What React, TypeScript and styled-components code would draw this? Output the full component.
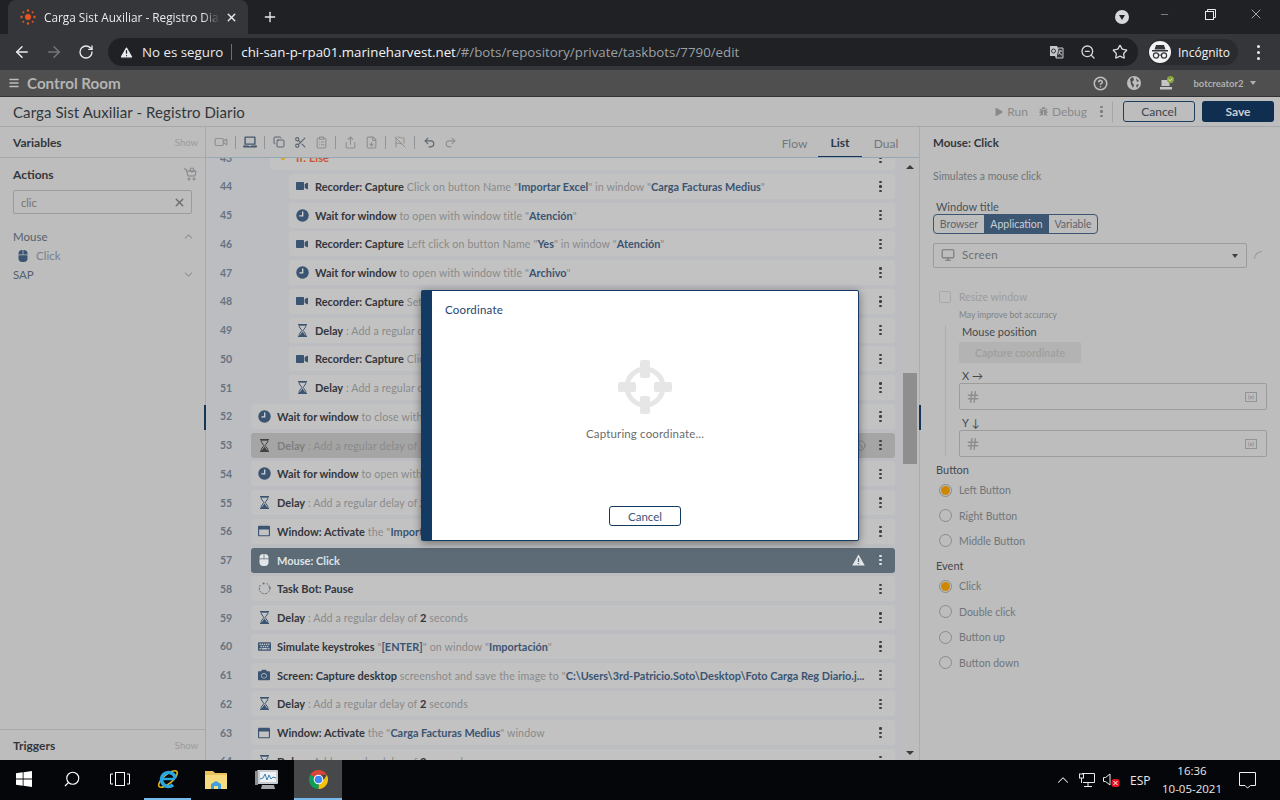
import React from "react"
import styled, { createGlobalStyle } from "styled-components"
import {
  FaVideo,
  FaRegWindowMaximize,
  FaMouse,
  FaKeyboard,
  FaCamera,
  FaLaptop,
  FaPlay,
  FaBug,
} from "react-icons/fa"
import {
  ArrowLeft,
  ArrowRight,
  RotateCw,
  X,
  Plus,
  Minus,
  Search,
  ZoomOut,
  Star,
  Monitor,
  Hash,
  Undo2,
  Redo2,
  ChevronUp,
  ChevronDown,
  Menu,
  CircleHelp,
  TriangleAlert,
  Ban,
  Video,
  Copy,
  Scissors,
  ClipboardList,
  Share,
  FileDown,
  FlagOff,
} from "lucide-react"

const GlobalStyle = createGlobalStyle`
  html, body {
    margin: 0;
    padding: 0;
    width: 1280px;
    height: 800px;
    overflow: hidden;
    font-family: "Lato", "Liberation Sans", sans-serif;
  }
  * { box-sizing: border-box; }
`

const Screen = styled.div`
  width: 1280px;
  height: 800px;
  display: flex;
  flex-direction: column;
  background: #bdbdbd;
  overflow: hidden;
  position: relative;
`

/* browser chrome */
const TabStrip = styled.div`
  height: 34px;
  background: #202124;
  display: flex;
  align-items: stretch;
  padding-left: 8px;
  color: #fff;
  font-family: "Open Sans", "Noto Sans", sans-serif;
`

const Tab = styled.div`
  width: 240px;
  background: #35363a;
  border-radius: 8px 8px 0 0;
  display: flex;
  align-items: center;
  padding-left: 12px;
  font-size: 11.8px;
  color: #e8eaed;
`

const TabTitle = styled.span`
  margin: 0 5px 0 8px;
  width: 176px;
  white-space: nowrap;
  overflow: hidden;
  -webkit-mask-image: linear-gradient(to right, #000 90%, transparent);
`

const NewTab = styled.div`
  width: 30px;
  display: flex;
  align-items: center;
  justify-content: flex-end;
  color: #e8eaed;
`

const StripEnd = styled.div`
  margin-left: auto;
  display: flex;
  align-items: center;
  padding-right: 1px;
  color: #e8eaed;
`

const MediaDot = styled.div`
  width: 14px;
  height: 14px;
  border-radius: 50%;
  background: #d7d8da;
  display: flex;
  align-items: center;
  justify-content: center;
  margin-right: 12px;
  &::after {
    content: "";
    border-left: 3.5px solid transparent;
    border-right: 3.5px solid transparent;
    border-top: 5px solid #202124;
    margin-top: 1px;
  }
`

const WinButton = styled.div`
  width: 46px;
  display: flex;
  justify-content: center;
  margin-top: -6px;
`

const Omnibar = styled.div`
  height: 36px;
  background: #35363a;
  display: flex;
  align-items: center;
  padding-left: 6px;
  color: #e8eaed;
  font-family: "Open Sans", "Noto Sans", sans-serif;
`

const NavIcon = styled.div<{ $off?: boolean }>`
  width: 32px;
  display: flex;
  justify-content: center;
  color: ${(p) => (p.$off ? "#74767a" : "#e8eaed")};
`

const UrlBox = styled.div`
  margin-left: 6px;
  width: 1030px;
  height: 28px;
  border-radius: 14px;
  background: #202124;
  display: flex;
  align-items: center;
  padding: 0 10px 0 11px;
  font-size: 13.3px;
  white-space: nowrap;
`

const UrlWarn = styled.span`
  margin: 0 8px 0 0;
  display: flex;
`

const UrlSep = styled.span`
  width: 1px;
  height: 16px;
  background: #6d6e71;
  margin: 0 9px 0 8px;
`

const UrlHost = styled.span`
  color: #f1f3f4;
`

const UrlPath = styled.span`
  color: #9aa0a6;
`

const UrlIcons = styled.div`
  margin-left: auto;
  display: flex;
  gap: 16px;
  align-items: center;
  color: #d5d7da;
`

const Incognito = styled.div`
  margin-left: 10px;
  width: 90px;
  height: 26px;
  border-radius: 13px;
  background: #2a2b2f;
  display: flex;
  align-items: center;
  padding-left: 1px;
  gap: 7px;
  font-size: 12px;
  color: #f1f3f4;
`

const IncognitoFace = styled.div`
  width: 22px;
  height: 22px;
  border-radius: 50%;
  background: #f1f3f4;
  display: flex;
  align-items: center;
  justify-content: center;
`

const ChromeDots = styled.div`
  margin-left: 19px;
  display: flex;
  flex-direction: column;
  gap: 3px;
  span {
    width: 3px;
    height: 3px;
    border-radius: 50%;
    background: #e8eaed;
  }
`

/* app header */
const TopBar = styled.div`
  height: 27px;
  background: #4f4f4f;
  border-bottom: 1px solid #333;
  display: flex;
  align-items: center;
  padding: 0 24.5px 0 8px;
  color: #bdbdbd;
`

const Brand = styled.div`
  margin-left: 7px;
  font-size: 15.2px;
  font-weight: 700;
  color: #b4b4b4;
`

const TopRight = styled.div`
  margin-left: auto;
  display: flex;
  align-items: center;
`

const UserName = styled.span`
  font-size: 9.5px;
  font-weight: 700;
  color: #b0b0b0;
  margin-left: 18px;
`

const Caret = styled.span<{ $color?: string }>`
  display: inline-block;
  border-left: 3.5px solid transparent;
  border-right: 3.5px solid transparent;
  border-top: 4px solid ${(p) => p.$color || "#b0b0b0"};
`

const UserCaret = styled(Caret)`
  margin-left: 6px;
`

const Gap = styled.span<{ $w: number }>`
  width: ${(p) => p.$w}px;
`

const TitleBar = styled.div`
  height: 30px;
  border-bottom: 1px solid #a8a8ac;
  background: #bdbdbd;
  display: flex;
  align-items: center;
  padding: 0 6px 0 13px;
`

const Title = styled.div`
  font-size: 15px;
  letter-spacing: 0.09px;
  color: #33363b;
`

const TitleActions = styled.div`
  margin-left: auto;
  display: flex;
  align-items: center;
  font-size: 12px;
  color: #8a8a8a;
`

const RunAction = styled.span`
  display: flex;
  align-items: center;
  gap: 4px;
  margin-right: 11px;
`

const Kebab = styled.span<{ $color?: string }>`
  width: 3px;
  display: flex;
  flex-direction: column;
  align-items: center;
  gap: 2px;
  span {
    width: 2.2px;
    height: 2.2px;
    border-radius: 50%;
    background: ${(p) => p.$color || "#3d4046"};
  }
`

const TitleKebab = styled.span`
  margin: 0 9px 0 2px;
`

const TitleSep = styled.span`
  width: 1px;
  height: 20px;
  background: #a6a6a6;
  margin-right: 10px;
`

const OutlineButton = styled.button`
  width: 72px;
  height: 21px;
  border: 1px solid #1d3d5f;
  border-radius: 3px;
  background: transparent;
  color: #3c4550;
  font: 400 12px "Lato", sans-serif;
  padding: 0;
`

const SaveButton = styled.button`
  width: 72px;
  height: 21px;
  margin-left: 7px;
  border: 0;
  border-radius: 3px;
  background: #102e4f;
  color: #c9ced4;
  font: 700 12px "Lato", sans-serif;
  padding: 0;
`

/* main panels */
const Main = styled.div`
  flex: 1;
  min-height: 0;
  display: flex;
`

const LeftPanel = styled.div`
  width: 206px;
  border-right: 1px solid #9dabb6;
  display: flex;
  flex-direction: column;
  background: #bdbdbd;
`

const PanelHead = styled.div`
  height: 31px;
  padding: 0 7px 0 13px;
  border-bottom: 1px solid #a9a9a9;
  display: flex;
  align-items: center;
  justify-content: space-between;
  font-size: 12px;
  font-weight: 700;
  color: #33373c;
`

const ShowLink = styled.span`
  font-size: 9.5px;
  font-weight: 400;
  color: #9b9b9b;
`

const ActionsBody = styled.div`
  flex: 1;
  padding: 7px 7px 0 13px;
`

const ActionsHead = styled.div`
  height: 18px;
  display: flex;
  align-items: center;
  justify-content: space-between;
  font-size: 12px;
  font-weight: 700;
  color: #33373c;
`

const SearchBox = styled.div`
  width: 179px;
  height: 24px;
  margin-top: 7px;
  border: 1px solid #9c9c9c;
  border-radius: 2px;
  display: flex;
  align-items: center;
  justify-content: space-between;
  padding: 0 5px 0 7px;
  font-size: 11px;
  color: #7a6e6e;
`

const Group = styled.div`
  margin-top: 13px;
  width: 182px;
  height: 19px;
  display: flex;
  align-items: center;
  justify-content: space-between;
  font-size: 11.5px;
  color: #55606c;
`

const NextGroup = styled(Group)`
  margin-top: 0;
`

const GroupItem = styled.div`
  height: 19px;
  display: flex;
  align-items: center;
  padding-left: 4px;
  gap: 7px;
  font-size: 11.5px;
  color: #75808c;
`

const TriggersHead = styled(PanelHead)`
  border-bottom: 0;
  border-top: 1px solid #a9a9a9;
`

const Center = styled.div`
  width: 714px;
  border-right: 1px solid #a9adb0;
  display: flex;
  flex-direction: column;
  min-height: 0;
`

const EditToolbar = styled.div`
  height: 31px;
  flex: none;
  border-bottom: 1px solid #96a7b4;
  display: flex;
  align-items: center;
  padding-left: 4.5px;
  color: #8a8a8a;
`

const ToolIcon = styled.span<{ $color?: string }>`
  width: 21px;
  display: flex;
  justify-content: center;
  color: ${(p) => p.$color || "#8f8f8f"};
`

const ToolSep = styled.span`
  width: 1px;
  height: 13px;
  background: #8f9498;
  margin: 0 3.5px;
`

const ViewTabs = styled.div`
  margin-left: auto;
  height: 100%;
  display: flex;
  padding-right: 9px;
  font-size: 12px;
  color: #73777c;
`

const ViewTab = styled.div<{ $on?: boolean; $w: number }>`
  width: ${(p) => p.$w}px;
  height: 30px;
  padding-top: 2px;
  display: flex;
  align-items: center;
  justify-content: center;
  color: ${(p) => (p.$on ? "#2c3a4a" : "#73777c")};
  font-weight: ${(p) => (p.$on ? 700 : 400)};
  border-bottom: ${(p) => (p.$on ? "1px solid #143556" : "0")};
`

const ListArea = styled.div`
  flex: 1;
  min-height: 0;
  display: flex;
  overflow: hidden;
  background: #bcbdc0;
`

const List = styled.div`
  flex: 1;
  margin-top: -12.8px;
`

const Row = styled.div`
  height: 28.75px;
  display: flex;
  align-items: flex-start;
  padding-right: 6px;
`

const RowNum = styled.div`
  width: 40px;
  height: 25px;
  flex: none;
  display: flex;
  align-items: center;
  justify-content: center;
  font-size: 10.5px;
  font-weight: 700;
  color: #667382;
`

const Card = styled.div<{ $level: number; $tone?: string }>`
  flex: 1;
  min-width: 0;
  height: 25px;
  margin-left: ${(p) => 5 + p.$level * 19}px;
  border-radius: 3px;
  display: flex;
  align-items: center;
  padding: 0 13px 0 5px;
  background: ${(p) =>
    p.$tone === "active" ? "#5c6b75" : p.$tone === "off" ? "#a5a5a5" : "#c2c2c2"};
`

const RowIcon = styled.span<{ $color?: string }>`
  width: 16px;
  flex: none;
  display: flex;
  justify-content: center;
  color: ${(p) => p.$color || "#3b5472"};
  margin-right: 5px;
`

const RowText = styled.div`
  flex: 1;
  min-width: 0;
  white-space: nowrap;
  overflow: hidden;
  font-size: 10.7px;
  color: #8a8a8a;
  letter-spacing: 0.1px;
`

const Strong = styled.span<{ $tone?: string }>`
  font-size: 11px;
  font-weight: 700;
  letter-spacing: 0;
  color: ${(p) =>
    p.$tone === "active" ? "#dfe3e6" : p.$tone === "off" ? "#7e7e7e" : "#33363c"};
`

const Val = styled.span`
  font-size: 10.9px;
  font-weight: 700;
  letter-spacing: 0;
  color: #3b5472;
`

const ElseText = styled.span`
  font-size: 11px;
  font-weight: 700;
  color: #c9552f;
`

const RowFlag = styled.span<{ $color: string; $gap: number }>`
  display: flex;
  color: ${(p) => p.$color};
  margin-right: ${(p) => p.$gap}px;
`

const Track = styled.div`
  width: 18px;
  flex: none;
  padding: 7px 2px 0;
  position: relative;
  background: #bdbdbd;
`

const TrackUp = styled.div`
  width: 0;
  margin: 0 auto;
  border-left: 4px solid transparent;
  border-right: 4px solid transparent;
  border-bottom: 4px solid #3c3c3c;
`

const Thumb = styled.div`
  height: 91px;
  margin-top: 204px;
  background: #8e8e8e;
`

const TrackDown = styled.div`
  position: absolute;
  bottom: 5px;
  left: 5px;
  border-left: 4px solid transparent;
  border-right: 4px solid transparent;
  border-top: 4px solid #3c3c3c;
`

const Handle = styled.div<{ $left: number }>`
  position: absolute;
  left: ${(p) => p.$left}px;
  top: 405px;
  width: 2px;
  height: 25px;
  background: #143556;
`

/* properties panel */
const RightPanel = styled.div`
  flex: 1;
  padding: 9px 13px 0 13px;
  background: #bdbdbd;
  display: flex;
  flex-direction: column;
`

const PropTitle = styled.div`
  font-size: 11.5px;
  font-weight: 700;
  color: #33363c;
  height: 13px;
  display: flex;
  align-items: center;
`

const PropDesc = styled.div`
  margin-top: 21px;
  font-size: 10.5px;
  color: #6f7479;
  height: 13px;
`

const FieldLabel = styled.div`
  margin: 17px 0 0 3px;
  font-size: 11px;
  color: #4b4f55;
  height: 13px;
  line-height: 13px;
`

const Segments = styled.div`
  width: 165px;
  height: 20px;
  margin-top: 1px;
  border: 1px solid #3c5571;
  border-radius: 4px;
  display: flex;
  overflow: hidden;
  font-size: 10.5px;
  color: #5d646c;
`

const Segment = styled.div<{ $on?: boolean; $w: number }>`
  width: ${(p) => p.$w}px;
  display: flex;
  align-items: center;
  justify-content: center;
  background: ${(p) => (p.$on ? "#3c5571" : "transparent")};
  color: ${(p) => (p.$on ? "#c9d0d8" : "#5d646c")};
`

const SelectRow = styled.div`
  margin-top: 9px;
  display: flex;
  align-items: center;
`

const SelectBox = styled.div`
  width: 314px;
  height: 25px;
  border: 1px solid #9c9c9c;
  border-radius: 2px;
  display: flex;
  align-items: center;
  padding: 0 8px 2px 7px;
  gap: 7px;
  font-size: 11.5px;
  color: #6c6f73;
  letter-spacing: 0.3px;
`

const SelectCaret = styled(Caret)`
  margin: 2px 0 0 auto;
`

const Spinner = styled.div`
  width: 8px;
  height: 8px;
  margin: -2px 0 0 7px;
  border-top: 1px solid #9a9a9a;
  border-left: 1px solid #9a9a9a;
  border-radius: 8px 0 0 0;
`

const CheckRow = styled.div`
  margin: 23px 0 0 6px;
  display: flex;
  align-items: center;
  gap: 8px;
  font-size: 10.5px;
  color: #9c9c9c;
`

const CheckBox = styled.span`
  width: 12px;
  height: 12px;
  border: 1px solid #a8a8a8;
  border-radius: 2px;
`

const Hint = styled.div`
  margin: 7px 0 0 26px;
  font-size: 8.5px;
  color: #7f8387;
  height: 10px;
  line-height: 10px;
`

const Nested = styled.div`
  margin: 5px 0 0 12px;
  border-left: 1px solid #adadad;
  padding-left: 13px;
  height: 131px;
`

const SubLabel = styled.div`
  font-size: 11px;
  color: #45494e;
  height: 14px;
  line-height: 14px;
  padding-left: 3px;
`

const CaptureBtn = styled.div`
  width: 122px;
  height: 21px;
  margin-top: 3px;
  border-radius: 2px;
  background: #b3b3b3;
  display: flex;
  align-items: center;
  justify-content: center;
  font-size: 10.5px;
  font-weight: 700;
  color: #a0a0a0;
`

const AxisLabel = styled(SubLabel)`
  margin-top: 6px;
`

const NumField = styled.div`
  width: 308px;
  height: 27px;
  border: 1px solid #9c9c9c;
  border-radius: 2px;
  display: flex;
  align-items: center;
  justify-content: space-between;
  padding: 0 9px 0 6px;
  color: #8f8f8f;
`

const VarBadge = styled.span`
  width: 12px;
  height: 10px;
  border: 1px solid #8f9499;
  font-size: 6px;
  line-height: 8px;
  text-align: center;
  color: #7d8287;
`

const SectionLabel = styled.div<{ $mt: number }>`
  margin: ${(p) => p.$mt}px 0 0 3px;
  font-size: 11px;
  color: #45494e;
  height: 14px;
  line-height: 13px;
`

const Radio = styled.div<{ $h: number }>`
  height: ${(p) => p.$h}px;
  margin-left: 6px;
  display: flex;
  align-items: center;
  gap: 7px;
  font-size: 10.5px;
  color: #70757a;
`

const RadioDot = styled.span<{ $on?: boolean }>`
  width: 13px;
  height: 13px;
  border: 1px solid #8b8b8b;
  border-radius: 50%;
  display: flex;
  align-items: center;
  justify-content: center;
  &::after {
    content: "";
    width: 9px;
    height: 9px;
    border-radius: 50%;
    background: ${(p) => (p.$on ? "#d08700" : "transparent")};
  }
`

/* coordinate dialog */
const Modal = styled.div`
  position: absolute;
  left: 421px;
  top: 290px;
  width: 438px;
  height: 251px;
  background: #fff;
  border: 1px solid #133a62;
  border-left-width: 11px;
  border-radius: 2px;
  box-shadow: 0 2px 8px rgba(0, 0, 0, 0.45);
  display: flex;
  flex-direction: column;
  align-items: center;
`

const ModalTitle = styled.div`
  align-self: flex-start;
  margin: 12px 0 0 13px;
  font-size: 11.5px;
  color: #25456b;
  letter-spacing: 0.2px;
  height: 13px;
  line-height: 13px;
`

const ModalIcon = styled.svg`
  margin-top: 43px;
  display: block;
`

const ModalText = styled.div`
  margin-top: 12px;
  font-size: 11.5px;
  color: #6c6c6c;
  letter-spacing: 0.15px;
  height: 14px;
  line-height: 14px;
`

const ModalCancel = styled.button`
  margin-top: auto;
  margin-bottom: 14px;
  width: 72px;
  height: 20px;
  padding: 0;
  background: #fff;
  border: 1px solid #133a62;
  border-radius: 3px;
  color: #3a5677;
  font: 400 11.5px "Lato", sans-serif;
`

/* windows taskbar */
const Taskbar = styled.div`
  height: 40px;
  flex: none;
  background: #05060a;
  display: flex;
  align-items: stretch;
  color: #fff;
  font-family: "Open Sans", "Noto Sans", sans-serif;
`

const TaskSlot = styled.div<{ $w: number; $active?: boolean; $open?: boolean }>`
  width: ${(p) => p.$w}px;
  display: flex;
  align-items: center;
  justify-content: center;
  background: ${(p) => (p.$active ? "#47484a" : "transparent")};
  border-bottom: 2px solid ${(p) => (p.$open ? "#76b9ed" : "transparent")};
`

const FlippedSearch = styled(Search)`
  transform: scaleX(-1);
`

const Tray = styled.div`
  margin-left: auto;
  display: flex;
  align-items: center;
  color: #e8e8e8;
`

const TrayLang = styled.span`
  font-size: 12px;
  margin-left: 10px;
  width: 27px;
`

const TrayClock = styled.div`
  width: 70px;
  text-align: center;
  font-size: 11.5px;
  line-height: 18px;
`

const TrayNote = styled.div`
  margin: 0 24px 0 12px;
  display: flex;
`

type Part = { t: string; k?: "b" | "v" }
type RowData = {
  n: number
  level: number
  icon: string
  parts: Part[]
  tone?: string
  flag?: "warn" | "off"
}

const delay: Part[] = [
  { t: "Delay", k: "b" },
  { t: " : Add a regular delay of " },
  { t: "2", k: "b" },
  { t: " seconds" },
]

const waitFor = (how: string, win: string): Part[] => [
  { t: "Wait for window", k: "b" },
  { t: ` to ${how} with window title "` },
  { t: win, k: "v" },
  { t: '"' },
]

const rows: RowData[] = [
  {
    n: 44,
    level: 2,
    icon: "video",
    parts: [
      { t: "Recorder: Capture", k: "b" },
      { t: ' Click on button Name "' },
      { t: "Importar Excel", k: "v" },
      { t: '" in window "' },
      { t: "Carga Facturas Medius", k: "v" },
      { t: '"' },
    ],
  },
  { n: 45, level: 2, icon: "clock", parts: waitFor("open", "Atención") },
  {
    n: 46,
    level: 2,
    icon: "video",
    parts: [
      { t: "Recorder: Capture", k: "b" },
      { t: ' Left click on button Name "' },
      { t: "Yes", k: "v" },
      { t: '" in window "' },
      { t: "Atención", k: "v" },
      { t: '"' },
    ],
  },
  { n: 47, level: 2, icon: "clock", parts: waitFor("open", "Archivo") },
  {
    n: 48,
    level: 2,
    icon: "video",
    parts: [{ t: "Recorder: Capture", k: "b" }, { t: " Set text in textbox" }],
  },
  { n: 49, level: 2, icon: "hourglass", parts: delay },
  {
    n: 50,
    level: 2,
    icon: "video",
    parts: [{ t: "Recorder: Capture", k: "b" }, { t: " Click on button" }],
  },
  { n: 51, level: 2, icon: "hourglass", parts: delay },
  { n: 52, level: 0, icon: "clock", parts: waitFor("close", "Archivo") },
  { n: 53, level: 0, icon: "hourglass", parts: delay, tone: "off", flag: "off" },
  { n: 54, level: 0, icon: "clock", parts: waitFor("open", "Importación") },
  { n: 55, level: 0, icon: "hourglass", parts: delay },
  {
    n: 56,
    level: 0,
    icon: "window",
    parts: [
      { t: "Window: Activate", k: "b" },
      { t: ' the "' },
      { t: "Importación", k: "v" },
      { t: '" window' },
    ],
  },
  {
    n: 57,
    level: 0,
    icon: "mouse",
    parts: [{ t: "Mouse: Click", k: "b" }],
    tone: "active",
    flag: "warn",
  },
  { n: 58, level: 0, icon: "pause", parts: [{ t: "Task Bot: Pause", k: "b" }] },
  { n: 59, level: 0, icon: "hourglass", parts: delay },
  {
    n: 60,
    level: 0,
    icon: "keyboard",
    parts: [
      { t: "Simulate keystrokes", k: "b" },
      { t: ' "' },
      { t: "[ENTER]", k: "v" },
      { t: '" on window "' },
      { t: "Importación", k: "v" },
      { t: '"' },
    ],
  },
  {
    n: 61,
    level: 0,
    icon: "camera",
    parts: [
      { t: "Screen: Capture desktop", k: "b" },
      { t: ' screenshot and save the image to "' },
      { t: "C:\\Users\\3rd-Patricio.Soto\\Desktop\\Foto Carga Reg Diario.j...", k: "v" },
    ],
  },
  { n: 62, level: 0, icon: "hourglass", parts: delay },
  {
    n: 63,
    level: 0,
    icon: "window",
    parts: [
      { t: "Window: Activate", k: "b" },
      { t: ' the "' },
      { t: "Carga Facturas Medius", k: "v" },
      { t: '" window' },
    ],
  },
  { n: 64, level: 0, icon: "hourglass", parts: delay },
]

function ClockIcon({ color = "#3b5472" }: { color?: string }) {
  return (
    <svg width="13" height="13" viewBox="0 0 13 13">
      <circle cx="6.5" cy="6.5" r="6.2" fill={color} />
      <path d="M6.7 2.6v4.2H3.4" fill="none" stroke="#d4d4d4" strokeWidth="1.3" />
    </svg>
  )
}

function PauseIcon() {
  return (
    <svg width="13" height="13" viewBox="0 0 13 13" fill="none" stroke="#5f6d7b">
      <path d="M8.5 1.6A5.3 5.3 0 1 1 3 2.6" strokeDasharray="2 1" />
      <circle cx="5.6" cy="1.4" r="1" fill="#5f6d7b" stroke="none" />
      <path d="M10.6 5.2l1.6 1.2 1-1.4" />
    </svg>
  )
}

function HourglassIcon({ color = "#3b5472" }: { color?: string }) {
  return (
    <svg width="11" height="13" viewBox="0 0 11 13">
      <path d="M1 .5h9M1 12.5h9" stroke={color} strokeWidth="1.2" />
      <path
        d="M2 1.2h7c0 2.4-2 3.4-2.8 5.3C7 8.4 9 9.4 9 11.8H2c0-2.4 2-3.4 2.8-5.3C4 4.6 2 3.6 2 1.2z"
        fill="none"
        stroke={color}
      />
      <path d="M5.5 7.4 8.6 12H2.4z" fill={color} />
    </svg>
  )
}

function WarnIcon() {
  return (
    <svg width="13" height="12" viewBox="0 0 13 12">
      <path d="M6.5.5 12.8 11.5H.2z" fill="#e3e6e8" />
      <path d="M6.5 4v4M6.5 9v1.3" stroke="#5c6b75" strokeWidth="1.3" />
    </svg>
  )
}

function rowIcon(name: string, tone?: string) {
  const c = tone === "active" ? "#e3e6e8" : tone === "off" ? "#3f4145" : "#3b5472"
  switch (name) {
    case "video":
      return <FaVideo size={12} color={c} />
    case "clock":
      return <ClockIcon color={c} />
    case "hourglass":
      return <HourglassIcon color={c} />
    case "window":
      return <FaRegWindowMaximize size={12} color={c} />
    case "mouse":
      return <FaMouse size={12} color={c} />
    case "keyboard":
      return <FaKeyboard size={13} color={c} />
    case "camera":
      return <FaCamera size={12} color={c} />
    default:
      return <PauseIcon />
  }
}

function Dots({ color }: { color?: string }) {
  return (
    <Kebab $color={color}>
      <span />
      <span />
      <span />
    </Kebab>
  )
}

function ListRow({ row }: { row: RowData }) {
  return (
    <Row>
      <RowNum>{row.n}</RowNum>
      <Card $level={row.level} $tone={row.tone}>
        <RowIcon>{rowIcon(row.icon, row.tone)}</RowIcon>
        <RowText>
          {row.parts.map((p, i) =>
            p.k === "b" ? (
              <Strong key={i} $tone={row.tone}>
                {p.t}
              </Strong>
            ) : p.k === "v" ? (
              <Val key={i}>{p.t}</Val>
            ) : (
              <span key={i}>{p.t}</span>
            ),
          )}
        </RowText>
        {row.flag === "warn" && (
          <RowFlag $color="#e3e6e8" $gap={14}>
            <WarnIcon />
          </RowFlag>
        )}
        {row.flag === "off" && (
          <RowFlag $color="#7f7f7f" $gap={13}>
            <Ban size={11} />
          </RowFlag>
        )}
        <Dots color={row.tone === "active" ? "#dfe3e6" : undefined} />
      </Card>
    </Row>
  )
}

function Favicon() {
  return (
    <svg width="16" height="16" viewBox="0 0 16 16" fill="#e8551f">
      <circle cx="8" cy="8" r="3" />
      <circle cx="8" cy="1.5" r="1.2" />
      <circle cx="8" cy="14.5" r="1.2" />
      <circle cx="1.5" cy="8" r="1.2" />
      <circle cx="14.5" cy="8" r="1.2" />
      <circle cx="3.3" cy="3.3" r="1" />
      <circle cx="12.7" cy="3.3" r="1" />
      <circle cx="3.3" cy="12.7" r="1" />
      <circle cx="12.7" cy="12.7" r="1" />
    </svg>
  )
}

function TranslateIcon() {
  return (
    <svg width="15" height="14" viewBox="0 0 15 14">
      <path d="M1 1h7l1 2h5v10H7l-1-2H1z" fill="#c4c6c9" />
      <path d="M9 3h5v10H7z" fill="#35363a" stroke="#c4c6c9" />
      <circle cx="4.5" cy="6" r="2" fill="none" stroke="#35363a" />
      <path d="M9.5 6H13M11 5.5c0 2-1 3.5-2 4M10 7c.5 1.5 1.5 2.5 3 3" stroke="#c4c6c9" fill="none" />
    </svg>
  )
}

function IncognitoIcon() {
  return (
    <svg width="18" height="16" viewBox="0 0 18 16" fill="#35363a">
      <path d="M5 1h8l1.5 4.5h-11z" />
      <rect x="1" y="6" width="16" height="1.5" />
      <circle cx="5" cy="11.5" r="2.6" fill="none" stroke="#35363a" strokeWidth="1.2" />
      <circle cx="13" cy="11.5" r="2.6" fill="none" stroke="#35363a" strokeWidth="1.2" />
      <path d="M7.5 11h3" stroke="#35363a" />
    </svg>
  )
}

function RestoreIcon() {
  return (
    <svg width="11" height="11" viewBox="0 0 11 11" fill="none" stroke="#e8eaed">
      <rect x="0.5" y="2.5" width="8" height="8" />
      <path d="M2.5 2.5v-2h8v8h-2" />
    </svg>
  )
}

function GlobeIcon() {
  return (
    <svg width="14" height="14" viewBox="0 0 14 14">
      <circle cx="7" cy="7" r="7" fill="#bdbdbd" />
      <path d="M3 3l3-2 1 3-2 2 2 3-1 3-2-4zM9 2l3 3-2 1zM9 9l3-1-2 4z" fill="#4f4f4f" />
    </svg>
  )
}

function AgentIcon() {
  return (
    <svg width="15" height="15" viewBox="0 0 15 15">
      <rect x="1.5" y="4" width="8" height="6" fill="#c5c5c5" />
      <rect x="0" y="11" width="12" height="2.5" fill="#c5c5c5" />
      <circle cx="10.5" cy="3.5" r="3.5" fill="#8aa33a" />
      <path d="M8.8 3.5l1.3 1.3 2-2.2" fill="none" stroke="#e8efd2" />
    </svg>
  )
}

function TrolleyIcon() {
  return (
    <svg width="14" height="14" viewBox="0 0 14 14" fill="none" stroke="#7f8286">
      <path d="M0 2h2l2 7h7l1-5H3" />
      <circle cx="8" cy="3" r="2" />
      <circle cx="5" cy="12" r="1" />
      <circle cx="10" cy="12" r="1" />
    </svg>
  )
}

function WinLogo() {
  return (
    <svg width="16" height="16" viewBox="0 0 16 16" fill="#fff">
      <path d="M0 2.3 6.7 1.3v6.3H0zM7.5 1.2 16 0v7.6H7.5zM0 8.4h6.7v6.3L0 13.7zM7.5 8.4H16V16l-8.5-1.2z" />
    </svg>
  )
}

function TaskViewIcon() {
  return (
    <svg width="20" height="14" viewBox="0 0 20 14" fill="none" stroke="#fff">
      <rect x="5.5" y="0.5" width="9" height="13" />
      <path d="M3 2H.5v10H3M17 2h2.5v10H17" />
    </svg>
  )
}

function IeIcon() {
  return (
    <svg width="24" height="24" viewBox="0 0 24 24" fill="none">
      <ellipse cx="12" cy="12" rx="11.5" ry="4.5" transform="rotate(-40 12 12)" stroke="#e2b619" strokeWidth="1.6" />
      <circle cx="12.5" cy="12.5" r="7" stroke="#2ba7e0" strokeWidth="3.6" strokeDasharray="36 8" strokeDashoffset="-6" />
      <path d="M6 12h13" stroke="#2ba7e0" strokeWidth="2.4" />
    </svg>
  )
}

function FolderIcon() {
  return (
    <svg width="22" height="19" viewBox="0 0 22 19">
      <path d="M0 1h8l2 2h12v16H0z" fill="#e8c35d" />
      <rect x="0" y="5" width="22" height="14" fill="#f5da80" />
      <path d="M6 19v-5l5-3 5 3v5h-3v-3H9v3z" fill="#3f9fdc" />
    </svg>
  )
}

function PerfIcon() {
  return (
    <svg width="24" height="22" viewBox="0 0 24 22">
      <rect x="2" y="2" width="21" height="14" rx="1" fill="#c7ccd1" />
      <rect x="5" y="4" width="16" height="10" fill="#eef2f5" />
      <path d="M5 11l3-1 2-4 2 6 2-5 2 4 2-2 3 1" fill="none" stroke="#3b82b8" />
      <rect x="0" y="3" width="3" height="14" fill="#8c8f91" />
      <path d="M7 17h12l1 4H6z" fill="#a5a7a9" />
    </svg>
  )
}

function ChromeLogo() {
  return (
    <svg width="23" height="23" viewBox="0 0 48 48">
      <path d="M24 24 6.7 14A20 20 0 0 1 41.3 14H24z" fill="#db4437" />
      <path d="M24 24h17.3A20 20 0 0 1 24 44z" fill="#f4c20d" />
      <path d="M24 44A20 20 0 0 1 6.7 14L24 24z" fill="#0f9d58" />
      <path d="M41.3 14A20 20 0 0 1 24 44l8.7-15z" fill="#f4c20d" />
      <circle cx="24" cy="24" r="10" fill="#fff" />
      <circle cx="24" cy="24" r="8" fill="#4285f4" />
    </svg>
  )
}

function NetworkIcon() {
  return (
    <svg width="16" height="14" viewBox="0 0 16 14" fill="none" stroke="#e8e8e8">
      <path d="M3 .5h12.5v9H4M9 9.5V13M5 13.5h8" />
      <rect x="0.5" y="1" width="4" height="4" />
      <path d="M2.5 5v5" />
    </svg>
  )
}

function VolumeIcon() {
  return (
    <svg width="17" height="14" viewBox="0 0 17 14">
      <path d="M.5 4.5h2L7 1v11L2.5 8.5h-2z" fill="none" stroke="#e8e8e8" />
      <rect x="8.5" y="6" width="8" height="8" rx="2.5" fill="#e81123" />
      <path d="M10.5 8l4 4M14.5 8l-4 4" stroke="#fff" />
    </svg>
  )
}

function NoteIcon() {
  return (
    <svg width="17" height="17" viewBox="0 0 17 17" fill="none" stroke="#f0f0f0">
      <path d="M.5.5h16v13h-5L8.5 16 6 13.5H.5z" />
    </svg>
  )
}

export default function App() {
  return (
    <Screen>
      <GlobalStyle />

      <TabStrip>
        <Tab>
          <Favicon />
          <TabTitle>Carga Sist Auxiliar - Registro Diario</TabTitle>
          <X size={13} strokeWidth={2.5} />
        </Tab>
        <NewTab>
          <Plus size={16} strokeWidth={2} />
        </NewTab>
        <StripEnd>
          <MediaDot />
          <WinButton>
            <Minus size={11} strokeWidth={1} />
          </WinButton>
          <WinButton>
            <RestoreIcon />
          </WinButton>
          <WinButton>
            <X size={16} strokeWidth={1} />
          </WinButton>
        </StripEnd>
      </TabStrip>

      <Omnibar>
        <NavIcon>
          <ArrowLeft size={18} />
        </NavIcon>
        <NavIcon $off>
          <ArrowRight size={18} />
        </NavIcon>
        <NavIcon>
          <RotateCw size={16} />
        </NavIcon>
        <UrlBox>
          <UrlWarn>
            <TriangleAlert size={15} fill="#e8eaed" stroke="#202124" />
          </UrlWarn>
          No es seguro
          <UrlSep />
          <UrlHost>chi-san-p-rpa01.marineharvest.net</UrlHost>
          <UrlPath>/#/bots/repository/private/taskbots/7790/edit</UrlPath>
          <UrlIcons>
            <TranslateIcon />
            <ZoomOut size={16} />
            <Star size={16} />
          </UrlIcons>
        </UrlBox>
        <Incognito>
          <IncognitoFace>
            <IncognitoIcon />
          </IncognitoFace>
          Incógnito
        </Incognito>
        <ChromeDots>
          <span />
          <span />
          <span />
        </ChromeDots>
      </Omnibar>

      <TopBar>
        <Menu size={12} strokeWidth={3} />
        <Brand>Control Room</Brand>
        <TopRight>
          <CircleHelp size={15} strokeWidth={2.5} />
          <Gap $w={19} />
          <GlobeIcon />
          <Gap $w={19} />
          <AgentIcon />
          <UserName>botcreator2</UserName>
          <UserCaret />
        </TopRight>
      </TopBar>

      <TitleBar>
        <Title>Carga Sist Auxiliar - Registro Diario</Title>
        <TitleActions>
          <RunAction>
            <FaPlay size={8} />
            Run
          </RunAction>
          <RunAction>
            <FaBug size={9} />
            Debug
          </RunAction>
          <TitleKebab>
            <Dots color="#7c7c7c" />
          </TitleKebab>
          <TitleSep />
          <OutlineButton>Cancel</OutlineButton>
          <SaveButton>Save</SaveButton>
        </TitleActions>
      </TitleBar>

      <Main>
        <LeftPanel>
          <PanelHead>
            Variables
            <ShowLink>Show</ShowLink>
          </PanelHead>
          <ActionsBody>
            <ActionsHead>
              Actions
              <TrolleyIcon />
            </ActionsHead>
            <SearchBox>
              clic
              <X size={13} strokeWidth={2.5} color="#6d6d6d" />
            </SearchBox>
            <Group>
              Mouse
              <ChevronUp size={13} color="#939393" />
            </Group>
            <GroupItem>
              <FaMouse size={12} color="#3b5472" />
              Click
            </GroupItem>
            <NextGroup>
              SAP
              <ChevronDown size={13} color="#939393" />
            </NextGroup>
          </ActionsBody>
          <TriggersHead>
            Triggers
            <ShowLink>Show</ShowLink>
          </TriggersHead>
        </LeftPanel>

        <Center>
          <EditToolbar>
            <ToolIcon>
              <Video size={14} />
            </ToolIcon>
            <ToolSep />
            <ToolIcon $color="#45586e">
              <FaLaptop size={14} />
            </ToolIcon>
            <ToolSep />
            <ToolIcon $color="#5a6470">
              <Copy size={12} />
            </ToolIcon>
            <ToolIcon $color="#5a6470">
              <Scissors size={13} />
            </ToolIcon>
            <ToolIcon>
              <ClipboardList size={13} />
            </ToolIcon>
            <ToolSep />
            <ToolIcon>
              <Share size={13} />
            </ToolIcon>
            <ToolIcon>
              <FileDown size={13} />
            </ToolIcon>
            <ToolSep />
            <ToolIcon>
              <FlagOff size={12} />
            </ToolIcon>
            <ToolSep />
            <ToolIcon $color="#5a6470">
              <Undo2 size={13} />
            </ToolIcon>
            <ToolIcon>
              <Redo2 size={13} />
            </ToolIcon>
            <ViewTabs>
              <ViewTab $w={47}>Flow</ViewTab>
              <ViewTab $w={44} $on>
                List
              </ViewTab>
              <ViewTab $w={48}>Dual</ViewTab>
            </ViewTabs>
          </EditToolbar>
          <ListArea>
            <List>
              <Row>
                <RowNum>43</RowNum>
                <Card $level={1}>
                  <RowIcon $color="#d6a400">
                    <ChevronDown size={14} strokeWidth={2} />
                  </RowIcon>
                  <RowText>
                    <ElseText>If: Else</ElseText>
                  </RowText>
                  <Dots />
                </Card>
              </Row>
              {rows.map((r) => (
                <ListRow key={r.n} row={r} />
              ))}
            </List>
            <Track>
              <TrackUp />
              <Thumb />
              <TrackDown />
            </Track>
          </ListArea>
        </Center>

        <RightPanel>
          <PropTitle>Mouse: Click</PropTitle>
          <PropDesc>Simulates a mouse click</PropDesc>
          <FieldLabel>Window title</FieldLabel>
          <Segments>
            <Segment $w={50}>Browser</Segment>
            <Segment $w={65} $on>
              Application
            </Segment>
            <Segment $w={48}>Variable</Segment>
          </Segments>
          <SelectRow>
            <SelectBox>
              <Monitor size={14} color="#75797d" />
              Screen
              <SelectCaret $color="#3f3f3f" />
            </SelectBox>
            <Spinner />
          </SelectRow>
          <CheckRow>
            <CheckBox />
            Resize window
          </CheckRow>
          <Hint>May improve bot accuracy</Hint>
          <Nested>
            <SubLabel>Mouse position</SubLabel>
            <CaptureBtn>Capture coordinate</CaptureBtn>
            <AxisLabel>X →</AxisLabel>
            <NumField>
              <Hash size={14} strokeWidth={2.6} />
              <VarBadge>(x)</VarBadge>
            </NumField>
            <AxisLabel>Y ↓</AxisLabel>
            <NumField>
              <Hash size={14} strokeWidth={2.6} />
              <VarBadge>(x)</VarBadge>
            </NumField>
          </Nested>
          <SectionLabel $mt={7}>Button</SectionLabel>
          <Radio $h={26}>
            <RadioDot $on />
            Left Button
          </Radio>
          <Radio $h={25}>
            <RadioDot />
            Right Button
          </Radio>
          <Radio $h={25}>
            <RadioDot />
            Middle Button
          </Radio>
          <SectionLabel $mt={6}>Event</SectionLabel>
          <Radio $h={26}>
            <RadioDot $on />
            Click
          </Radio>
          <Radio $h={25}>
            <RadioDot />
            Double click
          </Radio>
          <Radio $h={26}>
            <RadioDot />
            Button up
          </Radio>
          <Radio $h={25}>
            <RadioDot />
            Button down
          </Radio>
        </RightPanel>
      </Main>

      <Taskbar>
        <TaskSlot $w={48}>
          <WinLogo />
        </TaskSlot>
        <TaskSlot $w={48}>
          <FlippedSearch size={18} strokeWidth={1.5} />
        </TaskSlot>
        <TaskSlot $w={48}>
          <TaskViewIcon />
        </TaskSlot>
        <TaskSlot $w={47} $open>
          <IeIcon />
        </TaskSlot>
        <TaskSlot $w={49}>
          <FolderIcon />
        </TaskSlot>
        <TaskSlot $w={54}>
          <PerfIcon />
        </TaskSlot>
        <TaskSlot $w={48} $active $open>
          <ChromeLogo />
        </TaskSlot>
        <Tray>
          <ChevronUp size={18} strokeWidth={1.4} />
          <Gap $w={7} />
          <NetworkIcon />
          <Gap $w={8.5} />
          <VolumeIcon />
          <TrayLang>ESP</TrayLang>
          <TrayClock>
            16:36
            <br />
            10-05-2021
          </TrayClock>
          <TrayNote>
            <NoteIcon />
          </TrayNote>
        </Tray>
      </Taskbar>

      <Handle $left={204} />
      <Handle $left={919} />

      <Modal>
        <ModalTitle>Coordinate</ModalTitle>
        <ModalIcon width="56" height="56" viewBox="0 0 56 56">
          <circle cx="28" cy="28" r="18" fill="none" stroke="#e6e6e6" strokeWidth="5" />
          <rect x="23" y="1" width="10" height="18" rx="2" fill="#e6e6e6" />
          <rect x="23" y="37" width="10" height="18" rx="2" fill="#e6e6e6" />
          <rect x="1" y="23" width="18" height="10" rx="2" fill="#e6e6e6" />
          <rect x="37" y="23" width="18" height="10" rx="2" fill="#e6e6e6" />
        </ModalIcon>
        <ModalText>Capturing coordinate...</ModalText>
        <ModalCancel>Cancel</ModalCancel>
      </Modal>
    </Screen>
  )
}
